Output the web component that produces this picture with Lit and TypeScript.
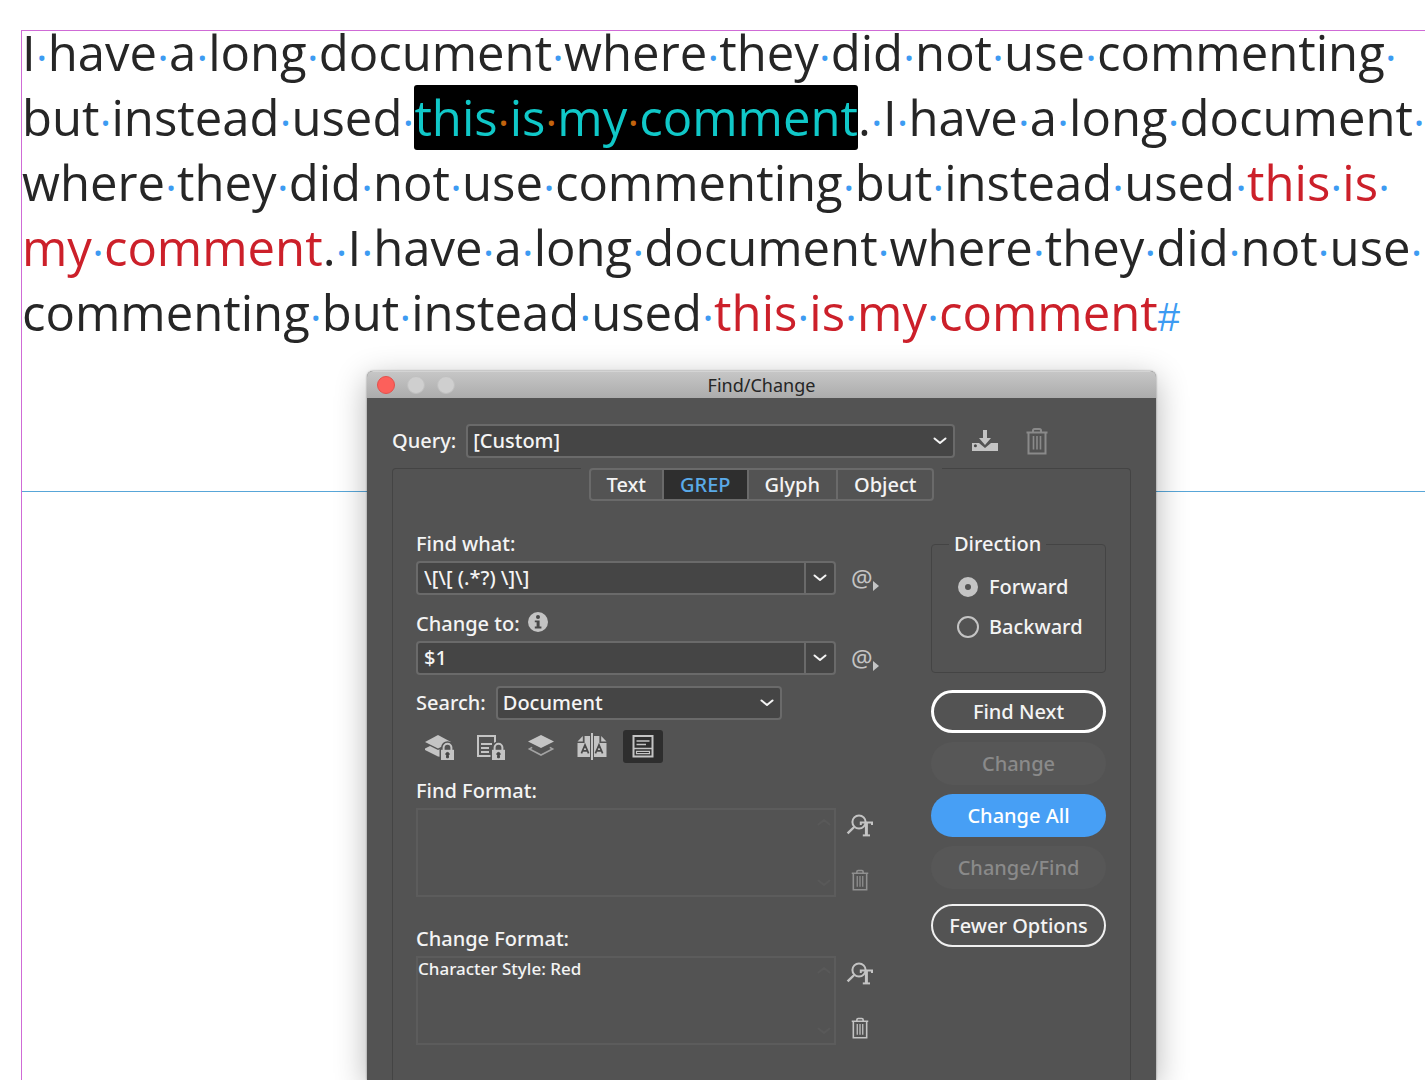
import { LitElement, html, css, svg, nothing } from "lit";
import { customElement, property, state } from "lit/decorators.js";

type Tone = "plain" | "marked" | "red";
interface Run {
  text: string;
  tone: Tone;
}

const LINES: Run[][] = [
  [{ text: "I have a long document where they did not use commenting ", tone: "plain" }],
  [
    { text: "but instead used ", tone: "plain" },
    { text: "this is my comment", tone: "marked" },
    { text: ". I have a long document ", tone: "plain" },
  ],
  [
    { text: "where they did not use commenting but instead used ", tone: "plain" },
    { text: "this is ", tone: "red" },
  ],
  [
    { text: "my comment", tone: "red" },
    { text: ". I have a long document where they did not use ", tone: "plain" },
  ],
  [
    { text: "commenting but instead used ", tone: "plain" },
    { text: "this is my comment", tone: "red" },
  ],
];

const chevron = html`<svg class="chevron" width="14" height="8" viewBox="0 0 14 8" aria-hidden="true">
  <path d="M1.5 1.5L7 6L12.5 1.5" fill="none" stroke="currentColor" stroke-width="2" stroke-linecap="round" stroke-linejoin="round" />
</svg>`;

const trash = (size: number) => html`<svg width=${size} height=${size} viewBox="0 0 28 28" aria-hidden="true">
  <g fill="none" stroke="currentColor" stroke-width="2">
    <path d="M3.5 5.5H24.5M5.5 5.5V26.5H22.5V5.5" />
    <path d="M10 5V3.6Q10 2 11.6 2H16.4Q18 2 18 3.6V5" />
    <path d="M10.5 9V22.5M14 9V22.5M17.5 9V22.5" stroke-width="1.6" />
  </g>
</svg>`;

const findType = html`<svg width="28" height="28" viewBox="0 0 28 28" aria-hidden="true">
  <g fill="none" stroke="currentColor" stroke-width="2">
    <circle cx="13" cy="10" r="6.6" />
    <path d="M8.2 15L1.6 21.4" stroke-width="2.4" />
    <path d="M14.8 13V10.4H26V13" stroke-width="2" />
    <path d="M20.4 10.4V23" stroke-width="3" />
    <path d="M16.8 23.4H24" />
  </g>
</svg>`;

const lock = svg`<path d="M19.6 17.2V14.6A3.9 3.9 0 0 1 27.4 14.6V17.2" fill="none" stroke="#535353" stroke-width="5" />
  <path d="M15.5 15.2H31V29H15.5Z" fill="#535353" />
  <path d="M19.6 17.2V14.6A3.9 3.9 0 0 1 27.4 14.6V17.2" fill="none" stroke="currentColor" stroke-width="2" />
  <path d="M17 16.8H30V27H17Z" fill="currentColor" />
  <path d="M23.5 19.4A1.7 1.7 0 0 1 24.4 22.5V24.8H22.6V22.5A1.7 1.7 0 0 1 23.5 19.4" fill="#454545" stroke="#454545" />`;

const scopeIcons = [
  {
    name: "Include locked layers",
    on: false,
    art: svg`<path d="M14 2L27 9L14 15.4L1 9Z" fill="currentColor" />
      <path d="M1 15.5L6 13L14 17L18 15V24L14 23.4L1 17Z" fill="currentColor" />${lock}`,
  },
  {
    name: "Include locked stories",
    on: false,
    art: svg`<path d="M3 3H20V23H3Z" fill="none" stroke="currentColor" stroke-width="2" />
      <path d="M6 11H17M6 15H14M6 19H14" stroke="currentColor" stroke-width="1.8" />${lock}`,
  },
  {
    name: "Include hidden layers",
    on: false,
    art: svg`<path d="M15 2L28 8.5L15 15L2 8.5Z" fill="currentColor" />
      <path d="M6.2 14.4L3.4 16L15 22L26.6 16L23.8 14.4" fill="none" stroke="currentColor" stroke-width="1.6" opacity="0.7" />`,
  },
  {
    name: "Include master pages",
    on: false,
    art: svg`<path d="M7.6 3H14V24H0.5V10H7.6Z" fill="currentColor" />
      <path d="M5.8 3V8.4H0.5Z" fill="currentColor" />
      <path d="M22.4 3H16V24H29.5V10H22.4Z" fill="currentColor" />
      <path d="M24.2 3V8.4H29.5Z" fill="currentColor" />
      <path d="M15 0V27" stroke="#535353" stroke-width="4" />
      <path d="M15 0V27" stroke="currentColor" stroke-width="2" />
      <path d="M4.4 20.4L8 12L11.6 20.4M5.6 17.8H10.4M18.4 20.4L22 12L25.6 20.4M19.6 17.8H24.4" fill="none" stroke="#4a4a4a" stroke-width="1.7" />`,
  },
  {
    name: "Include footnotes",
    on: true,
    art: svg`<path d="M5.5 3H24.5V23.5H5.5Z" fill="none" stroke="currentColor" stroke-width="2" />
      <path d="M8.5 8H21.5M8.5 11.6H18M6 15.4H24" stroke="currentColor" stroke-width="1.5" />
      <path d="M8.5 18.4H21.5V20.6H8.5Z" fill="none" stroke="currentColor" stroke-width="1.2" />`,
  },
];

@customElement("story-text")
class StoryText extends LitElement {
  static styles = css`
    :host {
      display: block;
      font-family: "Open Sans", "Noto Sans", sans-serif;
      font-size: 49px;
      line-height: 65px;
      color: #262626;
      white-space: nowrap;
    }
    .story {
      margin: 0;
    }
    .line {
      display: block;
    }
    .red {
      color: #cc202a;
    }
    .marked {
      display: inline-block;
      color: #10c8c8;
      background: #000;
      border-radius: 3px;
    }
    .gap {
      display: inline-block;
      width: 12px;
      text-align: center;
      font-size: 44px;
      line-height: 40px;
      vertical-align: -3px;
      color: #3d9bf2;
    }
    .marked .gap {
      color: #c2640d;
    }
    .end {
      font-family: "Liberation Sans", sans-serif;
      font-size: 40px;
      line-height: 40px;
      color: #3d9bf2;
    }
  `;

  private run(r: Run) {
    const words = r.text.split(" ");
    return html`<span class=${r.tone}
      >${words.map((w, i) => html`${w}${i < words.length - 1 ? html`<span class="gap">·</span>` : nothing}`)}</span
    >`;
  }

  render() {
    return html`<p class="story">
      ${LINES.map(
        (line, i) =>
          html`<span class="line"
            >${line.map((r) => this.run(r))}${i === LINES.length - 1 ? html`<span class="end">#</span>` : nothing}</span
          >`
      )}
    </p>`;
  }
}

const controls = css`
  * {
    box-sizing: border-box;
  }
  button,
  input,
  select,
  textarea {
    font: inherit;
    color: inherit;
    margin: 0;
  }
  button {
    padding: 0;
    border: 0;
    background: none;
  }
  .chevron {
    display: block;
  }
`;

@customElement("drop-list")
class DropList extends LitElement {
  static styles = [
    controls,
    css`
      :host {
        display: flex;
        align-items: center;
        gap: 10px;
      }
      .box {
        flex: 1;
        display: grid;
        align-items: center;
      }
      .list,
      .box .chevron {
        grid-area: 1 / 1;
      }
      .list {
        appearance: none;
        width: 100%;
        height: 34px;
        padding: 0 32px 0 5px;
        border: 2px solid #6a6a6a;
        border-radius: 4px;
        background: #454545;
      }
      .box .chevron {
        justify-self: end;
        margin-right: 8px;
        pointer-events: none;
      }
    `,
  ];
  @property() label = "";
  @property() value = "";

  render() {
    return html`<label for="list">${this.label}</label>
      <span class="box">
        <select class="list" id="list">
          <option>${this.value}</option>
        </select>
        ${chevron}
      </span>`;
  }
}

@customElement("combo-field")
class ComboField extends LitElement {
  static styles = [
    controls,
    css`
      :host {
        display: grid;
        grid-template-columns: 1fr 32px;
        column-gap: 12px;
        row-gap: 5px;
      }
      .head {
        grid-column: 1 / -1;
        display: flex;
        align-items: flex-start;
        gap: 8px;
        line-height: 24px;
      }
      .info {
        display: flex;
        color: #c4c4c4;
      }
      .combo {
        display: flex;
        height: 34px;
        border: 2px solid #6a6a6a;
        border-radius: 4px;
        background: #454545;
      }
      .entry {
        flex: 1;
        min-width: 0;
        padding: 0 6px;
        border: 0;
        background: none;
        outline: none;
      }
      .open {
        display: flex;
        align-items: center;
        justify-content: center;
        width: 30px;
        border-left: 2px solid #6a6a6a;
      }
      .special {
        display: flex;
        align-items: center;
        padding-left: 3px;
        color: #c4c4c4;
        font-size: 24px;
        font-weight: 400;
      }
      .special svg {
        align-self: end;
        margin-bottom: 4px;
      }
    `,
  ];
  @property() label = "";
  @property() value = "";
  @property({ type: Boolean }) info = false;

  render() {
    return html`<span class="head">
        <label for="entry">${this.label}</label>
        ${this.info
          ? html`<button class="info" aria-label="Information">
              <svg width="20" height="20" viewBox="0 0 20 20" aria-hidden="true">
                <circle cx="10" cy="10" r="10" fill="currentColor" />
                <circle cx="10" cy="5" r="2" fill="#484848" />
                <path d="M6.8 8.4H11.6V14.6H13.4V16.4H6.8V14.6H8.6V10.2H6.8Z" fill="#484848" />
              </svg>
            </button>`
          : nothing}
      </span>
      <span class="combo">
        <input class="entry" id="entry" type="text" .value=${this.value} />
        <button class="open" aria-label="Recent entries">${chevron}</button>
      </span>
      <button class="special" aria-label="Special characters for search">
        @<svg width="6" height="10" viewBox="0 0 6 10" aria-hidden="true">
          <path d="M0 0L6 5L0 10Z" fill="currentColor" />
        </svg>
      </button>`;
  }
}

@customElement("format-box")
class FormatBox extends LitElement {
  static styles = [
    controls,
    css`
      :host {
        display: grid;
        grid-template-columns: 1fr 28px;
        column-gap: 10px;
        row-gap: 5px;
        padding-right: 6px;
      }
      .caption {
        grid-column: 1 / -1;
        line-height: 24px;
      }
      .box {
        display: grid;
        height: 89px;
        border: 2px solid #5c5c5c;
      }
      .settings {
        grid-area: 1 / 1;
        resize: none;
        border: 0;
        padding: 0;
        background: none;
        outline: none;
        overflow: hidden;
        font-size: 17px;
        line-height: 22px;
      }
      .arrows {
        grid-area: 1 / 1;
        justify-self: end;
        display: flex;
        flex-direction: column;
        justify-content: space-between;
        padding: 8px 3px;
        color: #595959;
        pointer-events: none;
      }
      .up {
        transform: rotate(180deg);
      }
      .tools {
        display: flex;
        flex-direction: column;
        justify-content: space-between;
        padding: 4px 0 6px;
        color: #c4c4c4;
      }
      .tool {
        display: flex;
        justify-content: center;
      }
      .tool:disabled {
        color: #909090;
      }
    `,
  ];
  @property() label = "";
  @property() value = "";

  render() {
    return html`<label class="caption" for="settings">${this.label}</label>
      <div class="box">
        <textarea class="settings" id="settings" readonly .value=${this.value}></textarea>
        <span class="arrows"><span class="up">${chevron}</span>${chevron}</span>
      </div>
      <div class="tools">
        <button class="tool" aria-label="Specify attributes">${findType}</button>
        <button class="tool" aria-label="Clear attributes" ?disabled=${!this.value}>${trash(22)}</button>
      </div>`;
  }
}

@customElement("find-change")
class FindChange extends LitElement {
  static styles = [
    controls,
    css`
      :host {
        display: flex;
        flex-direction: column;
        font-family: "Noto Sans", "Open Sans", sans-serif;
        font-size: 20px;
        font-weight: 500;
        line-height: 24px;
        color: #f4f4f4;
        background: #535353;
        border-radius: 6px 6px 0 0;
        box-shadow: 0 8px 32px rgba(0, 0, 0, 0.3), 0 0 2px rgba(0, 0, 0, 0.5);
      }
      .titlebar {
        display: grid;
        grid-template-columns: 1fr auto 1fr;
        align-items: center;
        height: 27px;
        padding: 0 10px;
        border-radius: 6px 6px 0 0;
        background: linear-gradient(#c6c6c6, #acacac);
        border-top: 1px solid #d4d4d4;
      }
      .lights {
        display: flex;
        align-items: center;
        gap: 12px;
      }
      .light {
        width: 18px;
        height: 18px;
        border-radius: 50%;
        background: #cfcfcf;
        border: 1px solid #c0c0c0;
      }
      .light.close {
        background: #fc605b;
        border-color: #e4504b;
      }
      .title {
        margin: 0;
        font-size: 18px;
        font-weight: 400;
        color: #262626;
      }
      .body {
        flex: 1;
        display: flex;
        flex-direction: column;
        gap: 10px;
        padding: 26px 25px 0;
      }
      .query {
        display: flex;
        align-items: center;
        gap: 16px;
      }
      .query-list {
        flex: 0 1 563px;
      }
      .save {
        display: flex;
        color: #c4c4c4;
      }
      .clear {
        display: flex;
        margin-left: 8px;
        color: #8a8a8a;
      }
      .panel {
        flex: 1;
        display: flex;
        flex-direction: column;
        border: 1px solid #444;
        border-bottom: 0;
        border-radius: 4px 4px 0 0;
      }
      .tabs {
        align-self: center;
        margin-top: -1px;
        padding: 0 8px;
        background: #535353;
      }
      .tabset {
        display: flex;
        border: 2px solid #6a6a6a;
        border-radius: 4px;
      }
      .tab {
        height: 29px;
        padding: 0 16px;
        border-left: 2px solid #6a6a6a;
      }
      .tab:first-child {
        border-left: 0;
      }
      .tab.active {
        color: #5aaae8;
        background: #2e2e2e;
      }
      .columns {
        display: flex;
        justify-content: space-between;
        padding: 31px 24px 0 23px;
      }
      .left {
        flex: 0 1 464px;
        display: flex;
        flex-direction: column;
      }
      .second {
        margin-top: 17px;
      }
      .search {
        width: 366px;
        margin-top: 11px;
      }
      .scopes {
        display: flex;
        gap: 11px;
        margin: 10px 0 16px;
        padding-left: 3px;
        color: #c4c4c4;
      }
      .scope {
        display: flex;
        align-items: center;
        justify-content: center;
        width: 40px;
        height: 33px;
        border-radius: 3px;
      }
      .scope.on {
        background: #2e2e2e;
      }
      .change-format {
        margin-top: 30px;
      }
      .right {
        flex: 0 0 175px;
        display: flex;
        flex-direction: column;
      }
      .direction {
        height: 141px;
        margin: 0 0 17px;
        padding: 19px 10px 0 25px;
        border: 1px solid #444;
        border-radius: 4px;
      }
      .legend {
        margin-left: -8px;
        padding: 0 5px;
      }
      .choice {
        display: flex;
        align-items: center;
        gap: 10px;
        margin-bottom: 16px;
      }
      .radio {
        appearance: none;
        flex: none;
        width: 22px;
        height: 22px;
        border: 2px solid #c4c4c4;
        border-radius: 50%;
      }
      .radio:checked {
        border-width: 7px;
        width: 20px;
        height: 20px;
        margin: 0 1px;
      }
      .actions {
        display: flex;
        flex-direction: column;
        gap: 9px;
      }
      .action {
        height: 43px;
        border-radius: 22px;
      }
      .action.main {
        border: 3px solid #fff;
      }
      .action.blue {
        color: #fff;
        background: #479ff5;
      }
      .action.outline {
        margin-top: 6px;
        border: 2px solid #f0f0f0;
      }
      .action:disabled {
        color: #8a8a8a;
        background: #575757;
      }
    `,
  ];

  @state() private tab = "GREP";
  @state() private forward = true;

  render() {
    return html`
      <header class="titlebar">
        <span class="lights">
          <button class="light close" aria-label="Close"></button>
          <button class="light" aria-label="Minimize" disabled></button>
          <button class="light" aria-label="Zoom" disabled></button>
        </span>
        <h1 class="title">Find/Change</h1>
      </header>
      <div class="body">
        <div class="query">
          <drop-list class="query-list" label="Query:" value="[Custom]"></drop-list>
          <button class="save" aria-label="Save query">
            <svg width="28" height="26" viewBox="0 0 28 26" aria-hidden="true">
              <path d="M1 15H8L14 20L20 15H27V23H1Z" fill="currentColor" />
              <path d="M12 2H16V10H20L14 17L8 10H12Z" fill="currentColor" />
              <circle cx="4.4" cy="17.8" r="1.5" fill="#484848" />
            </svg>
          </button>
          <button class="clear" aria-label="Delete query" disabled>${trash(28)}</button>
        </div>
        <div class="panel">
          <div class="tabs">
            <div class="tabset" role="tablist">
              ${["Text", "GREP", "Glyph", "Object"].map(
                (t) =>
                  html`<button
                    class="tab ${t === this.tab ? "active" : ""}"
                    role="tab"
                    aria-selected=${t === this.tab}
                    @click=${() => (this.tab = t)}
                  >
                    ${t}
                  </button>`
              )}
            </div>
          </div>
          <div class="columns">
            <div class="left">
              <combo-field label="Find what:" value="\\[\\[ (.*?) \\]\\]"></combo-field>
              <combo-field class="second" label="Change to:" value="$1" info></combo-field>
              <drop-list class="search" label="Search:" value="Document"></drop-list>
              <div class="scopes">
                ${scopeIcons.map(
                  (s) =>
                    html`<button class="scope ${s.on ? "on" : ""}" aria-label=${s.name} aria-pressed=${s.on}>
                      <svg width="30" height="27" viewBox="0 0 30 27" aria-hidden="true">${s.art}</svg>
                    </button>`
                )}
              </div>
              <format-box label="Find Format:"></format-box>
              <format-box class="change-format" label="Change Format:" value="Character Style: Red"></format-box>
            </div>
            <div class="right">
              <fieldset class="direction">
                <legend class="legend">Direction</legend>
                ${["Forward", "Backward"].map(
                  (d) =>
                    html`<label class="choice">
                      <input
                        class="radio"
                        type="radio"
                        name="direction"
                        .checked=${(d === "Forward") === this.forward}
                        @change=${() => (this.forward = d === "Forward")}
                      />
                      ${d}
                    </label>`
                )}
              </fieldset>
              <div class="actions">
                <button class="action main">Find Next</button>
                <button class="action" disabled>Change</button>
                <button class="action blue">Change All</button>
                <button class="action" disabled>Change/Find</button>
                <button class="action outline">Fewer Options</button>
              </div>
            </div>
          </div>
        </div>
      </div>
    `;
  }
}

@customElement("app-root")
class AppRoot extends LitElement {
  static styles = css`
    :host {
      display: block;
      background: #fff;
    }
    .pasteboard {
      position: relative;
      box-sizing: border-box;
      height: 100vh;
      padding: 30px 0 0 21px;
      overflow: hidden;
    }
    .page {
      height: 100%;
      border: solid #cf6bd6;
      border-width: 1px 0 0 1px;
    }
    .frame {
      height: 460px;
      border-bottom: 1px solid #58a6d8;
    }
    .text {
      margin-top: -11px;
    }
    .frame::before {
      content: "";
      display: table;
    }
    .window {
      position: absolute;
      left: 367px;
      top: 371px;
      bottom: 0;
      width: 789px;
    }
  `;

  render() {
    return html`<main class="pasteboard">
      <section class="page">
        <div class="frame"><story-text class="text"></story-text></div>
      </section>
      <find-change class="window" role="dialog" aria-label="Find/Change"></find-change>
    </main>`;
  }
}
